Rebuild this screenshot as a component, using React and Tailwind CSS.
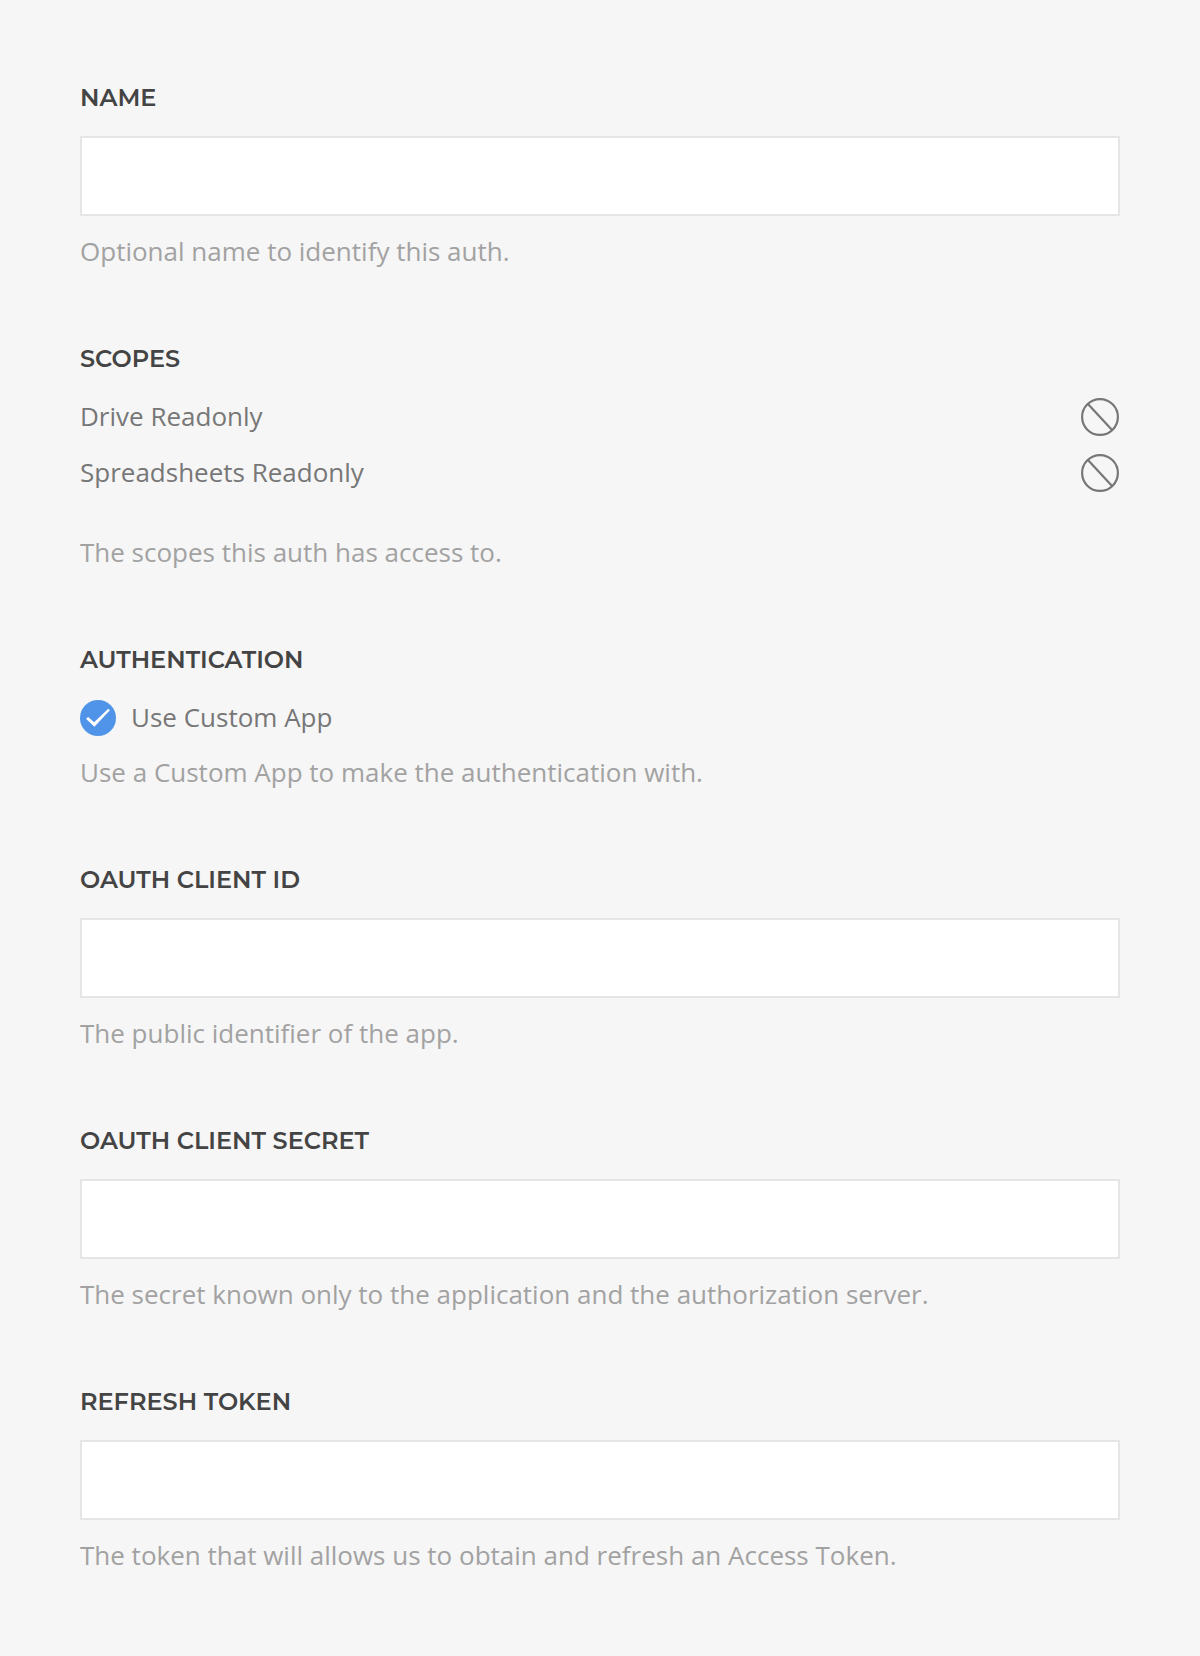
import React from "react";

function Label({ children, ...props }) {
  return (
    <label
      className="block font-['Montserrat','Inter',sans-serif] text-2xl leading-8 font-semibold text-[#444444] uppercase"
      {...props}
    >
      {children}
    </label>
  );
}

function Help({ className, children }) {
  return <p className={`text-[#a2a2a2] ${className}`}>{children}</p>;
}

function TextField({ id, label, help }) {
  return (
    <section>
      <Label htmlFor={id}>{label}</Label>
      <input
        id={id}
        type="text"
        className="mt-[22px] block h-20 w-full border-2 border-[#e5e5e5] bg-white px-5 text-[#777777] outline-none"
      />
      <Help className="mt-[17px]">{help}</Help>
    </section>
  );
}

function BanIcon() {
  return (
    <svg
      className="mr-px size-[38px] shrink-0"
      viewBox="0 0 38 38"
      fill="none"
      stroke="#777777"
      strokeWidth="2.2"
    >
      <circle cx="19" cy="19" r="17.9" />
      <path d="M6.5 5.5 31.5 32.5" />
    </svg>
  );
}

function CheckIcon() {
  return (
    <svg className="size-9 shrink-0" viewBox="0 0 36 36">
      <circle cx="18" cy="18" r="18" fill="#4f94e8" />
      <path d="M6 18.8 8.2 17.1 14.1 22.3 28.3 8.8 29.9 10.3 14.4 26.7Z" fill="#ffffff" />
    </svg>
  );
}

function Scope({ name }) {
  return (
    <li className="flex items-start justify-between">
      <span>{name}</span>
      <BanIcon />
    </li>
  );
}

export default function App() {
  return (
    <form className="flex min-h-[1656px] w-full flex-col gap-[74px] bg-[#f6f6f6] px-20 pt-[82px] font-['Open_Sans',sans-serif] text-[26px] leading-9 text-[#777777]">
      <TextField id="name" label="Name" help="Optional name to identify this auth." />

      <section>
        <Label>Scopes</Label>
        <ul className="mt-[23px] flex flex-col gap-[18px]">
          <Scope name="Drive Readonly" />
          <Scope name="Spreadsheets Readonly" />
        </ul>
        <Help className="mt-[42px]">The scopes this auth has access to.</Help>
      </section>

      <section>
        <Label>Authentication</Label>
        <div className="mt-6 flex items-start gap-[15px]">
          <CheckIcon />
          <span className="leading-[34px]">Use Custom App</span>
        </div>
        <Help className="mt-[18px]">Use a Custom App to make the authentication with.</Help>
      </section>

      <TextField id="client-id" label="OAuth Client ID" help="The public identifier of the app." />
      <TextField
        id="client-secret"
        label="OAuth Client Secret"
        help="The secret known only to the application and the authorization server."
      />
      <TextField
        id="refresh-token"
        label="Refresh Token"
        help="The token that will allows us to obtain and refresh an Access Token."
      />
    </form>
  );
}
